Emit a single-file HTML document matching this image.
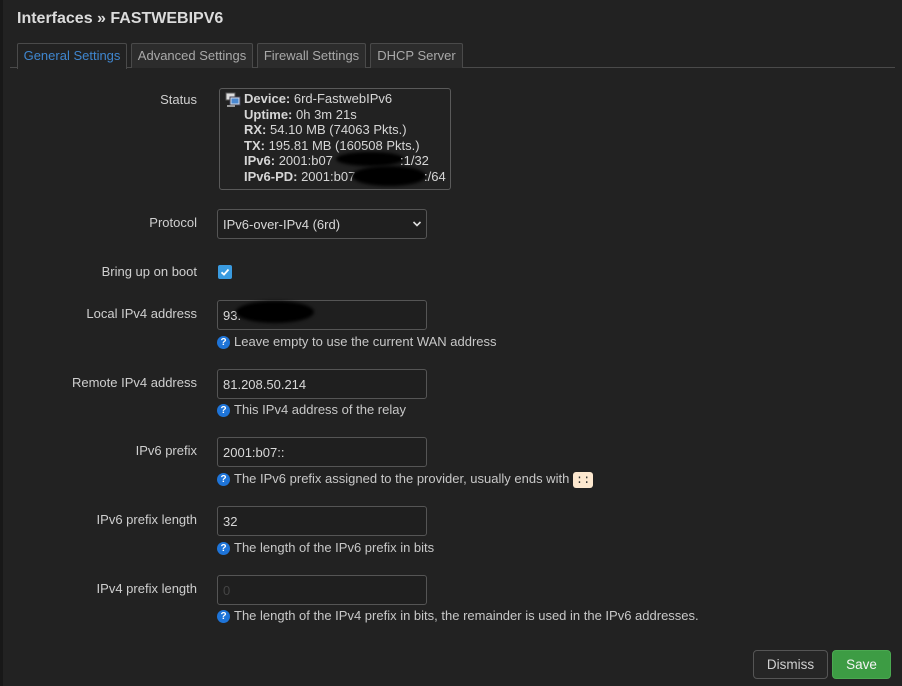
<!DOCTYPE html>
<html><head><meta charset="utf-8"><style>
*{box-sizing:border-box;margin:0;padding:0}
body{width:902px;height:686px;background:#222222;font-family:"Liberation Sans",sans-serif;font-size:13px;color:#cfcfcf;position:relative;overflow:hidden}
.strip{position:absolute;left:0;top:0;width:3px;height:686px;background:#181818}
.a{position:absolute}
h1{position:absolute;left:17px;top:10px;font-size:16px;font-weight:bold;color:#dcdcdc}
.tabline{position:absolute;left:10px;top:67px;width:885px;height:1px;background:#4a4a4a}
.tab{position:absolute;top:43px;height:25px;border:1px solid #4a4a4a;border-bottom:none;background:#2c2c2c;color:#a9a9a9;font-size:13px;padding-top:4px;text-align:center;border-radius:2px 2px 0 0}
.tab.act{background:#222;color:#3f86cf;height:26px}
.lbl{position:absolute;right:705px;font-size:13px;color:#cfcfcf;white-space:nowrap}
.inp{position:absolute;left:217px;width:210px;height:30px;border:1px solid #555;border-radius:3px;background:#1f1f1f;color:#d8d8d8;padding:7px 0 0 5px;font-size:13px}
.hint{position:absolute;left:217px;font-size:13px;color:#c8c8c8;white-space:nowrap}
.q{display:inline-block;width:13px;height:13px;border-radius:50%;background:#1e74d8;color:#fff;font-size:10px;font-weight:bold;text-align:center;line-height:13px;vertical-align:-1px;margin-right:4px;position:relative;top:-2px}
.blot{position:absolute;background:#000;border-radius:50%;filter:blur(1.5px)}
.btn{position:absolute;top:650px;height:29px;border-radius:4px;font-size:13.5px;text-align:center;padding-top:6px}
.st{position:absolute;font-size:13px;color:#d6d6d6;white-space:nowrap}
</style></head><body>
<div class="strip"></div>
<h1>Interfaces » FASTWEBIPV6</h1>
<div class="tabline"></div>
<div class="tab act" style="left:17px;width:110px">General Settings</div>
<div class="tab" style="left:131px;width:122px">Advanced Settings</div>
<div class="tab" style="left:257px;width:109px">Firewall Settings</div>
<div class="tab" style="left:370px;width:93px">DHCP Server</div>

<div class="lbl" style="top:92px">Status</div>
<div class="a" style="left:219px;top:88px;width:232px;height:102px;border:1px solid #5a5a5a;border-radius:3px"></div>
<svg class="a" style="left:225px;top:92px" width="16" height="16" viewBox="0 0 16 16"><rect x="1" y="1" width="9" height="7" fill="#ddd" stroke="#555"/><rect x="5" y="5" width="10" height="8" fill="#cfd8e8" stroke="#445"/><rect x="6.5" y="6.5" width="7" height="5" fill="#4a88d0"/><rect x="2" y="13" width="8" height="2" fill="#999"/></svg>
<div class="st" style="left:244px;top:91px;line-height:15.5px">
<b>Device:</b> 6rd-FastwebIPv6<br><b>Uptime:</b> 0h 3m 21s<br><b>RX:</b> 54.10 MB (74063 Pkts.)<br><b>TX:</b> 195.81 MB (160508 Pkts.)<br><b>IPv6:</b> 2001:b07<br><b>IPv6-PD:</b> 2001:b07</div>
<div class="blot" style="left:336px;top:152px;width:68px;height:14px"></div>
<div class="blot" style="left:352px;top:166px;width:74px;height:20px"></div>
<div class="st" style="left:400px;top:153px">:1/32</div>
<div class="st" style="left:424px;top:169px">:/64</div>

<div class="lbl" style="top:215px">Protocol</div>
<div class="inp" style="top:209px">IPv6-over-IPv4 (6rd)</div>
<svg class="a" style="left:412px;top:220px" width="10" height="8" viewBox="0 0 10 8"><path d="M1.5 2 L5 5.5 L8.5 2" stroke="#ddd" stroke-width="1.6" fill="none"/></svg>

<div class="lbl" style="top:264px">Bring up on boot</div>
<div class="a" style="left:218px;top:265px;width:14px;height:14px;border-radius:2px;background:#3a9be0"></div>
<svg class="a" style="left:218px;top:265px" width="14" height="14" viewBox="0 0 14 14"><path d="M3.5 7.3 L6 9.6 L10.5 4.5" stroke="#fff" stroke-width="1.8" fill="none"/></svg>

<div class="lbl" style="top:306px">Local IPv4 address</div>
<div class="inp" style="top:300px">93.</div>
<div class="blot" style="left:236px;top:301px;width:78px;height:22px"></div>
<div class="hint" style="top:334px"><span class="q">?</span>Leave empty to use the current WAN address</div>

<div class="lbl" style="top:375px">Remote IPv4 address</div>
<div class="inp" style="top:369px">81.208.50.214</div>
<div class="hint" style="top:402px"><span class="q">?</span>This IPv4 address of the relay</div>

<div class="lbl" style="top:443px">IPv6 prefix</div>
<div class="inp" style="top:437px">2001:b07::</div>
<div class="hint" style="top:471px"><span class="q">?</span>The IPv6 prefix assigned to the provider, usually ends with <span style="display:inline-block;background:#fde8cf;color:#333;border-radius:3px;padding:1px 3px;font-family:'Liberation Mono',monospace;font-size:12px">::</span></div>

<div class="lbl" style="top:512px">IPv6 prefix length</div>
<div class="inp" style="top:506px">32</div>
<div class="hint" style="top:540px"><span class="q">?</span>The length of the IPv6 prefix in bits</div>

<div class="lbl" style="top:581px">IPv4 prefix length</div>
<div class="inp" style="top:575px;color:#444">0</div>
<div class="hint" style="top:608px"><span class="q">?</span>The length of the IPv4 prefix in bits, the remainder is used in the IPv6 addresses.</div>

<div class="btn" style="left:753px;width:75px;background:#262626;border:1px solid #555;color:#d0d0d0">Dismiss</div>
<div class="btn" style="left:832px;width:59px;background:#3d9c44;border:1px solid #4aa850;color:#f4f4f4">Save</div>
</body></html>
